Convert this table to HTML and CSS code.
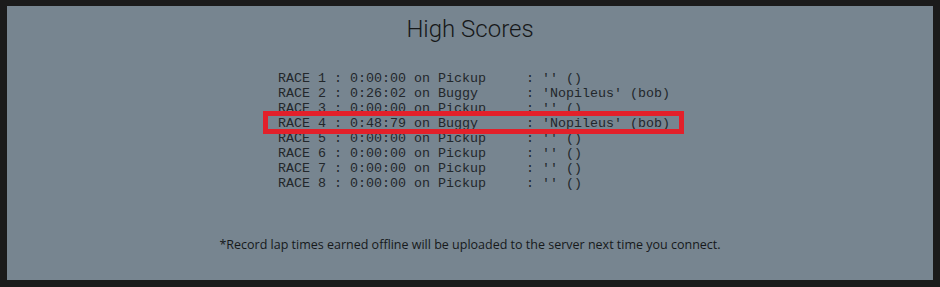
FILE: index.html
```html
<!DOCTYPE html>
<html>
<head>
<meta charset="utf-8">
<link rel="stylesheet" href="styles.css">
</head>
<body>
<div class="panel">
  <h1 class="title">High Scores</h1>
  <div class="list-wrap">
    <div class="list">
<pre class="rows">RACE 1 : 0:00:00 on Pickup     : '' ()
RACE 2 : 0:26:02 on Buggy      : 'Nopileus' (bob)
RACE 3 : 0:00:00 on Pickup     : '' ()
RACE 4 : 0:48:79 on Buggy      : 'Nopileus' (bob)
RACE 5 : 0:00:00 on Pickup     : '' ()
RACE 6 : 0:00:00 on Pickup     : '' ()
RACE 7 : 0:00:00 on Pickup     : '' ()
RACE 8 : 0:00:00 on Pickup     : '' ()</pre>
      <div class="highlight"></div>
    </div>
  </div>
  <p class="note">*Record lap times earned offline will be uploaded to the server next time you connect.</p>
</div>
</body>
</html>
```
FILE: styles.css
```css
html, body {
  margin: 0;
  padding: 0;
  background: #1b1b1b;
}
body {
  width: 940px;
  height: 287px;
  overflow: hidden;
}
.panel {
  margin: 6px 7px 7px 7px;
  height: 274px;
  box-sizing: border-box;
  background: #778590;
  padding-top: 9px;
}
.title {
  margin: 0;
  font-family: Roboto, "Liberation Sans", sans-serif;
  font-weight: 300;
  font-size: 24px;
  line-height: 28px;
  color: #161819;
  text-align: center;
}
.list-wrap {
  margin-top: 28px;
  padding-left: 271px;
}
.list {
  position: relative;
  display: inline-block;
}
.rows {
  margin: 0;
  font-family: "Liberation Mono", "Courier New", monospace;
  font-size: 13.33px;
  line-height: 15px;
  color: #22272b;
}
.highlight {
  position: absolute;
  left: -15px;
  top: 40px;
  width: 421px;
  height: 23px;
  box-sizing: border-box;
  border: 5px solid #e3202a;
}
.note {
  margin: 45px 0 0 0;
  font-family: "Open Sans", "Liberation Sans", sans-serif;
  font-size: 12.5px;
  line-height: 18px;
  color: #16191b;
  text-align: center;
}
```
